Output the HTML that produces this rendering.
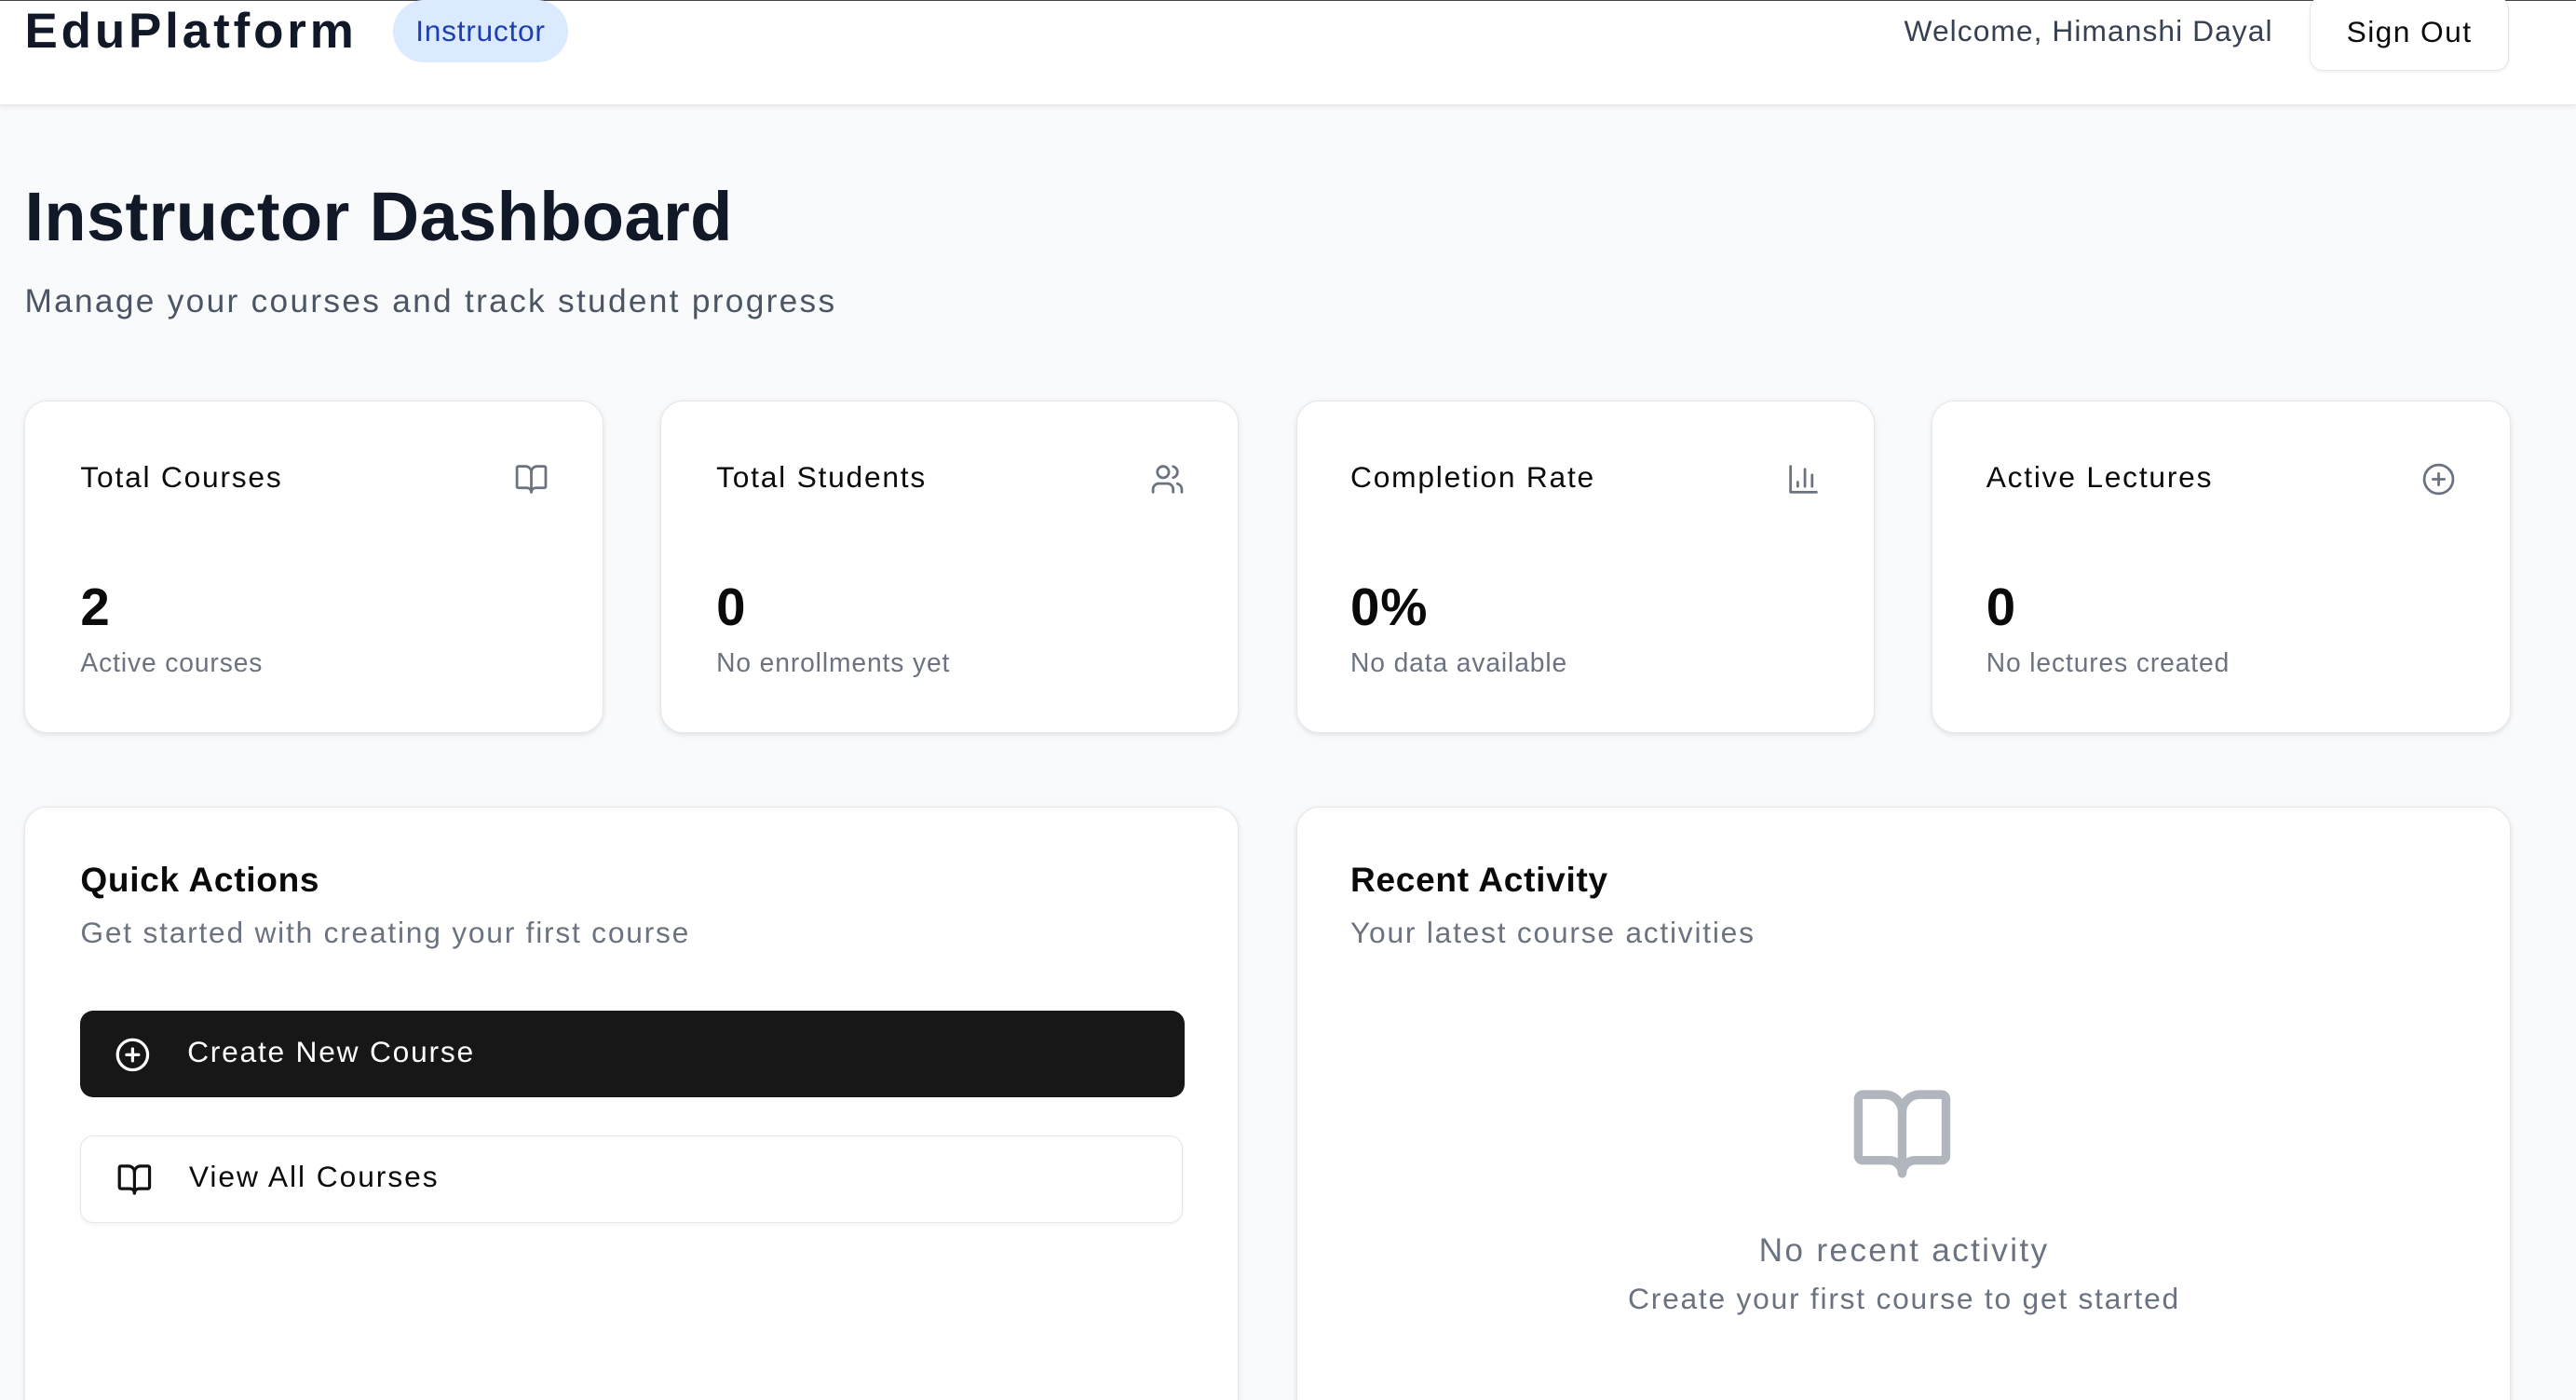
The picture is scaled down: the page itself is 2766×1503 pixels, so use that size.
<!DOCTYPE html>
<html><head><meta charset="utf-8"><style>
html,body{margin:0;padding:0;width:2766px;height:1503px;overflow:hidden;background:#f9fafb}
#w{zoom:1.76403;width:1568px;height:852px;position:relative;font-family:"Liberation Sans",sans-serif;color:#111827}
.a{position:absolute;white-space:nowrap}
.hdr{left:0;top:0;width:1568px;height:63px;background:#fff;border-top:1px solid #444;border-bottom:1px solid #e5e7eb;box-shadow:0 1px 3px rgba(0,0,0,.08)}
.card{background:#fff;border:1px solid #e5e7eb;border-radius:14px;box-shadow:0 1px 3px rgba(0,0,0,.1)}
.ct{font-size:18px;color:#0a0a0a;letter-spacing:1px}
.num{font-size:32px;font-weight:700;color:#0a0a0a;letter-spacing:.5px}
.sub{font-size:16px;color:#6b7280;letter-spacing:.5px}
svg{fill:none;stroke-linecap:round;stroke-linejoin:round}
</style></head><body><div id="w">
<div class="a hdr"></div>
<div class="a" style="left:15px;top:1px;font-size:30px;font-weight:700;color:#111827;line-height:36px;letter-spacing:2.2px">EduPlatform</div>
<div class="a" style="left:239px;top:0;width:107px;height:38px;border-radius:19px;background:#dbeafe;color:#1e40af;font-size:18px;line-height:38px;text-align:center;letter-spacing:.4px">Instructor</div>
<div class="a" style="left:1159px;top:8px;font-size:18px;color:#374151;line-height:22px;letter-spacing:.6px">Welcome, Himanshi Dayal</div>
<div class="a" style="left:1406px;top:-2px;width:120px;height:44px;border:1px solid #e5e7eb;border-radius:8px;background:#fff;box-shadow:0 1px 2px rgba(0,0,0,.06);font-size:18px;text-align:center;line-height:42px;color:#0a0a0a;letter-spacing:.8px">Sign Out</div>

<div class="a" style="left:15px;top:106px;font-size:42px;font-weight:700;line-height:52px;color:#111827;letter-spacing:.2px">Instructor Dashboard</div>
<div class="a" style="left:15px;top:172px;font-size:20px;color:#4b5563;line-height:24px;letter-spacing:1.3px">Manage your courses and track student progress</div>

<div class="a card" style="left:15px;top:244px;width:351px;height:201px"></div>
<div class="a card" style="left:402px;top:244px;width:351px;height:201px"></div>
<div class="a card" style="left:789px;top:244px;width:351px;height:201px"></div>
<div class="a card" style="left:1176px;top:244px;width:351px;height:201px"></div>

<div class="a ct" style="left:49px;top:280px">Total Courses</div>
<div class="a ct" style="left:436px;top:280px">Total Students</div>
<div class="a ct" style="left:822px;top:280px">Completion Rate</div>
<div class="a ct" style="left:1209px;top:280px">Active Lectures</div>

<svg class="a" style="left:313px;top:281px" width="21" height="21" viewBox="0 0 24 24" stroke="#6b7280" stroke-width="1.8"><path d="M12 7v14"/><path d="M3 18a1 1 0 0 1-1-1V4a1 1 0 0 1 1-1h5a4 4 0 0 1 4 4 4 4 0 0 1 4-4h5a1 1 0 0 1 1 1v13a1 1 0 0 1-1 1h-6a3 3 0 0 0-3 3 3 3 0 0 0-3-3z"/></svg>
<svg class="a" style="left:700px;top:281px" width="21" height="21" viewBox="0 0 24 24" stroke="#6b7280" stroke-width="1.8"><path d="M16 21v-2a4 4 0 0 0-4-4H6a4 4 0 0 0-4 4v2"/><circle cx="9" cy="7" r="4"/><path d="M22 21v-2a4 4 0 0 0-3-3.87"/><path d="M16 3.13a4 4 0 0 1 0 7.75"/></svg>
<svg class="a" style="left:1087px;top:281px" width="21" height="21" viewBox="0 0 24 24" stroke="#6b7280" stroke-width="1.8"><path d="M3 3v18h18"/><path d="M18 17V9"/><path d="M13 17V5"/><path d="M8 17v-3"/></svg>
<svg class="a" style="left:1474px;top:281px" width="21" height="21" viewBox="0 0 24 24" stroke="#6b7280" stroke-width="1.8"><circle cx="12" cy="12" r="10"/><path d="M8 12h8M12 8v8"/></svg>

<div class="a num" style="left:49px;top:351px">2</div>
<div class="a num" style="left:436px;top:351px">0</div>
<div class="a num" style="left:822px;top:351px">0%</div>
<div class="a num" style="left:1209px;top:351px">0</div>
<div class="a sub" style="left:49px;top:394px">Active courses</div>
<div class="a sub" style="left:436px;top:394px">No enrollments yet</div>
<div class="a sub" style="left:822px;top:394px">No data available</div>
<div class="a sub" style="left:1209px;top:394px">No lectures created</div>

<div class="a card" style="left:15px;top:491px;width:738px;height:400px"></div>
<div class="a card" style="left:789px;top:491px;width:738px;height:400px"></div>

<div class="a" style="left:49px;top:523px;font-size:21px;font-weight:700;color:#0a0a0a;letter-spacing:.4px">Quick Actions</div>
<div class="a" style="left:49px;top:557px;font-size:18px;color:#6b7280;letter-spacing:1px">Get started with creating your first course</div>
<div class="a" style="left:49px;top:615px;width:672px;height:53px;background:#171717;border-radius:8px"></div>
<svg class="a" style="left:70px;top:631px" width="22" height="22" viewBox="0 0 24 24" stroke="#fff" stroke-width="2"><circle cx="12" cy="12" r="10"/><path d="M8 12h8M12 8v8"/></svg>
<div class="a" style="left:114px;top:630px;font-size:18px;color:#fff;letter-spacing:1px">Create New Course</div>
<div class="a" style="left:49px;top:691px;width:670px;height:52px;background:#fff;border:1px solid #e5e7eb;border-radius:8px;box-shadow:0 1px 2px rgba(0,0,0,.05)"></div>
<svg class="a" style="left:71px;top:707px" width="22" height="22" viewBox="0 0 24 24" stroke="#111" stroke-width="2"><path d="M12 7v14"/><path d="M3 18a1 1 0 0 1-1-1V4a1 1 0 0 1 1-1h5a4 4 0 0 1 4 4 4 4 0 0 1 4-4h5a1 1 0 0 1 1 1v13a1 1 0 0 1-1 1h-6a3 3 0 0 0-3 3 3 3 0 0 0-3-3z"/></svg>
<div class="a" style="left:115px;top:706px;font-size:18px;color:#0a0a0a;letter-spacing:1.1px">View All Courses</div>

<div class="a" style="left:822px;top:523px;font-size:21px;font-weight:700;color:#0a0a0a;letter-spacing:.4px">Recent Activity</div>
<div class="a" style="left:822px;top:557px;font-size:18px;color:#6b7280;letter-spacing:1px">Your latest course activities</div>
<svg class="a" style="left:1126px;top:658px" width="64" height="64" viewBox="0 0 24 24" stroke="#b1b5bd" stroke-width="2"><path d="M12 7v14"/><path d="M3 18a1 1 0 0 1-1-1V4a1 1 0 0 1 1-1h5a4 4 0 0 1 4 4 4 4 0 0 1 4-4h5a1 1 0 0 1 1 1v13a1 1 0 0 1-1 1h-6a3 3 0 0 0-3 3 3 3 0 0 0-3-3z"/></svg>
<div class="a" style="left:789px;width:740px;top:750px;text-align:center;font-size:20px;color:#6b7280;letter-spacing:1.3px">No recent activity</div>
<div class="a" style="left:789px;width:740px;top:780px;text-align:center;font-size:18px;color:#6b7280;letter-spacing:1px">Create your first course to get started</div>
</div></body></html>
